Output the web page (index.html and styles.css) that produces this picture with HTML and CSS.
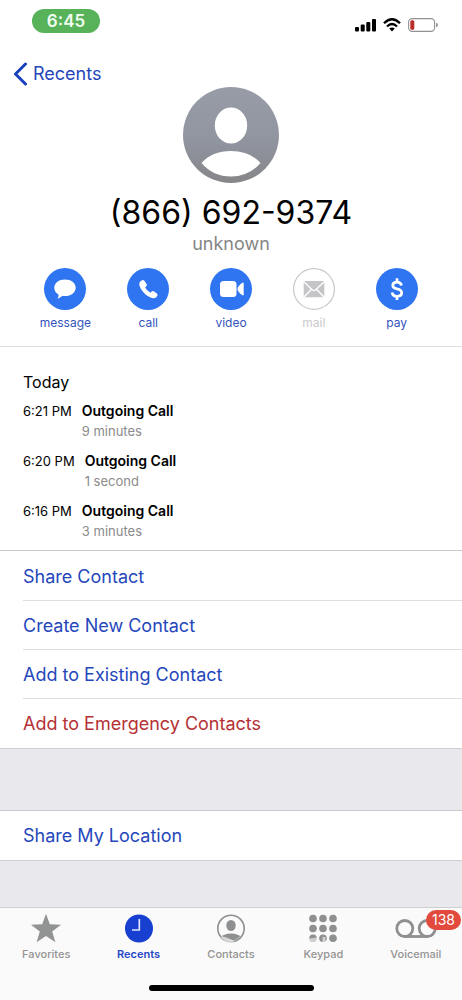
FILE: index.html
```html
<!DOCTYPE html>
<html lang="en">
<head>
<meta charset="utf-8">
<meta name="viewport" content="width=device-width, initial-scale=1">
<title>(866) 692-9374</title>
<link rel="stylesheet" href="styles.css">
</head>
<body>
<div class="screen">
  <div class="status">
    <span class="clock">6:45</span>
    <div class="indicators">
      <svg width="21" height="14" viewBox="0 0 21 14" aria-hidden="true"><rect x="0" y="9" width="4" height="4.500" rx="1"/><rect x="5.700" y="6.500" width="4" height="7" rx="1"/><rect x="11.300" y="4" width="4" height="9.500" rx="1"/><rect x="17" y="1" width="4" height="12.500" rx="1"/></svg>
      <svg width="18" height="14" viewBox="0 0 18 14" aria-hidden="true"><g fill="none" stroke="#000" stroke-width="2.300"><path d="M1 5.200Q9-2.600 17 5.200"/><path d="M4 8.500Q9 3.600 14 8.500"/></g><path d="M6.200 10.600Q9 8.400 11.800 10.600L9 13.600Z"/></svg>
      <svg width="30" height="14" viewBox="0 0 30 14" aria-hidden="true"><rect x=".6" y=".6" width="26" height="12.800" rx="3.600" fill="#fff" stroke="#959092" stroke-width="1.100"/><rect x="2.300" y="2.300" width="4" height="9.400" rx="1.500" fill="#b82d2b"/><path d="M28 4.800Q30 5.300 30 7T28 9.200Z" fill="#999"/></svg>
    </div>
  </div>
  <nav class="nav">
    <a class="back" href="#"><svg width="15" height="24" viewBox="0 0 15 24" aria-hidden="true"><path d="M12.500 2L2.500 12L12.500 22" fill="none" stroke="#1741bd" stroke-width="3" stroke-linecap="round" stroke-linejoin="round"/></svg>Recents</a>
  </nav>
  <main>
    <header class="profile">
      <svg class="avatar" width="96" height="96" viewBox="0 0 96 96" aria-hidden="true"><defs><linearGradient id="g" x1="0" y1="0" x2="0" y2="1"><stop offset="0" stop-color="#989ca7"/><stop offset=".55" stop-color="#9195a0"/><stop offset="1" stop-color="#868689"/></linearGradient></defs><circle cx="48" cy="48" r="48" fill="url(#g)"/><ellipse cx="48" cy="38.500" rx="16.200" ry="18" fill="#fff"/><path d="M18.500 76Q29 64 48 64T77.500 76Q66 89.500 48 89.500T18.500 76Z" fill="#fff"/></svg>
      <h1 class="number">(866) 692-9374</h1>
      <p class="kind">unknown</p>
      <div class="actions">
        <button class="action" type="button"><svg class="disc" viewBox="0 0 42 42" aria-hidden="true"><circle cx="21" cy="21" r="21" fill="#2f74f0"/><path d="M21 11.500c6 0 10.700 3.500 10.700 8.200s-4.700 8.300-10.700 8.300q-1.500 0-2.700-.3c-1.300 1.500-3 2.500-5 2.800 1-1 1.400-2.500 1.200-4-2.600-1.500-4.200-4-4.200-6.800 0-4.700 4.700-8.200 10.700-8.200Z" fill="#fff"/></svg>message</button>
        <button class="action" type="button"><svg class="disc" viewBox="0 0 42 42" aria-hidden="true"><circle cx="21" cy="21" r="21" fill="#2f74f0"/><path d="M15 12.200q1.400-.8 2.400.6l2.200 3.200q.7 1.200-.3 2.200l-1.200 1.200q1.800 3.300 5.300 5.300l1.200-1.200q1-1 2.200-.2l3 2.100q1.400 1 .5 2.500-1.500 2.800-4.400 2.400c-3-.4-6.500-2.600-9.300-5.700-2.700-2.900-4.300-6.200-4.400-8.800q0-2.400 2.800-3.600Z" fill="#fff"/></svg>call</button>
        <button class="action" type="button"><svg class="disc" viewBox="0 0 42 42" aria-hidden="true"><circle cx="21" cy="21" r="21" fill="#2f74f0"/><rect x="10" y="13" width="16.500" height="16" rx="3.500" fill="#fff"/><path d="M27.500 21q0-1.500.8-2.300 2.200-3.500 4.700-4.200.7 0 .7.900v11.200q0 .9-.7.900-2.500-.7-4.700-4.200-.8-.8-.8-2.300Z" fill="#fff"/></svg>video</button>
        <button class="action off" type="button" disabled><svg class="disc" viewBox="0 0 42 42" aria-hidden="true"><circle cx="21" cy="21" r="20.400" fill="#fff" stroke="#c8c8c8" stroke-width="1.200"/><rect x="10.700" y="13" width="20.600" height="16.200" rx="1" fill="#c5c5c7"/><path d="M10.500 13.500l8.700 8.300q1.800 1.500 3.600 0l8.700-8.300M11 29l7.300-7.500M31 29l-7.300-7.500" fill="none" stroke="#fff" stroke-width="1.300"/></svg>mail</button>
        <button class="action" type="button"><svg class="disc" viewBox="0 0 42 42" aria-hidden="true"><circle cx="21" cy="21" r="21" fill="#2f74f0"/><path d="M25.400 17.600C25 15.200 23.500 14.200 21 14.200c-2.600 0-4.200 1.200-4.200 3.200 0 2.200 1.800 2.900 4.200 3.500 2.700.6 4.700 1.400 4.700 3.900 0 2.200-1.800 3.500-4.700 3.500-2.800 0-4.500-1.200-4.900-3.800" fill="none" stroke="#fff" stroke-width="2.800"/><path d="M21 10.200v4M21 28v4" fill="none" stroke="#fff" stroke-width="2.600"/></svg>pay</button>
      </div>
    </header>
    <section class="history">
      <h2 class="day">Today</h2>
      <div class="call"><time>6:21 PM</time><div><strong>Outgoing Call</strong><p>9 minutes</p></div></div>
      <div class="call"><time>6:20 PM</time><div><strong>Outgoing Call</strong><p>1 second</p></div></div>
      <div class="call"><time>6:16 PM</time><div><strong>Outgoing Call</strong><p>3 minutes</p></div></div>
    </section>
    <div class="list contact">
      <button class="item" type="button">Share Contact</button>
      <button class="item" type="button">Create New Contact</button>
      <button class="item" type="button">Add to Existing Contact</button>
      <button class="item danger" type="button">Add to Emergency Contacts</button>
    </div>
    <div class="list share">
      <button class="item" type="button">Share My Location</button>
    </div>
  </main>
  <footer class="tabs-area">
    <nav class="tabs">
      <a class="tab" href="#"><svg width="32" height="30" viewBox="0 0 32 30" aria-hidden="true"><path d="M16 .8L19.800 11.300L31 11.700L22.200 18.500L25.400 29.200L16 23L6.600 29.200L9.800 18.500L1 11.700L12.200 11.300Z" fill="#929494"/></svg>Favorites</a>
      <a class="tab active" href="#"><svg width="30" height="30" viewBox="0 0 30 30" aria-hidden="true"><circle cx="15" cy="15.500" r="14" fill="#173fd0"/><path d="M15.300 6v11H8" fill="none" stroke="#dfe6ff" stroke-width="1.700"/></svg>Recents</a>
      <a class="tab" href="#"><svg width="30" height="30" viewBox="0 0 30 30" aria-hidden="true"><clipPath id="c"><circle cx="15" cy="15.500" r="12"/></clipPath><circle cx="15" cy="15.500" r="13.200" fill="none" stroke="#8e8f90" stroke-width="1.600"/><g clip-path="url(#c)" fill="#8e8f90"><ellipse cx="15" cy="12.500" rx="4.700" ry="5.500"/><path d="M3 25q5-4.500 12-4.500T27 25V30H3Z"/></g><path d="M4.500 23.500q8 0 14 5.500l-4 1Q8 29 4.500 23.500Z" fill="#fafafa" opacity=".6"/></svg>Contacts</a>
      <a class="tab" href="#"><svg width="30" height="30" viewBox="0 0 30 30" fill="#8e8f90" aria-hidden="true"><circle cx="5" cy="5.500" r="3.800"/><circle cx="15" cy="5.500" r="3.800"/><circle cx="25" cy="5.500" r="3.800"/><circle cx="5" cy="15.500" r="3.800"/><circle cx="15" cy="15.500" r="3.800"/><circle cx="25" cy="15.500" r="3.800"/><circle cx="5" cy="25.300" r="3.800"/><circle cx="15" cy="25.300" r="3.800"/><circle cx="25" cy="25.300" r="3.800"/><path d="M1 25.500l8-1v3l-4 2-4-2ZM14.500 24h3v5h-3Z" fill="#fafafa" opacity=".6"/></svg>Keypad</a>
      <a class="tab" href="#"><svg width="42" height="30" viewBox="0 0 42 30" fill="none" stroke="#8e8f90" stroke-width="2.800" aria-hidden="true"><circle cx="9.800" cy="15.500" r="8"/><circle cx="32.200" cy="15.500" r="8"/><path d="M9.800 23.500H32.200"/></svg>Voicemail<span class="badge">138</span></a>
    </nav>
    <div class="home"></div>
  </footer>
</div>
</body>
</html>
```
FILE: styles.css
```css
* { box-sizing: border-box; }
body, h1, h2, p { margin: 0; font-weight: 400; }
body { font-family: Inter, "Liberation Sans", sans-serif; color: #000; background: #fff; }
button { font: inherit; border: 0; background: none; padding: 0; }
a { text-decoration: none; }
svg { display: block; flex: none; }
.screen { min-height: 100vh; display: flex; flex-direction: column; }
.status { display: flex; justify-content: space-between; align-items: center; padding: 9px 24px 0 32px; }
.clock { width: 68px; line-height: 24px; border-radius: 12px; background: #57b25a; color: #f2fff0; font-size: 17px; font-weight: 600; text-align: center; }
.indicators { display: flex; gap: 7px; padding-top: 8px; }
.nav { padding: 29px 13px 0; height: 54px; }
.back { display: inline-flex; align-items: center; gap: 5px; color: #2547bb; font-size: 18px; line-height: 24px; }
main { flex: 1; background: #e9e9ed; }
.profile { display: flex; flex-direction: column; align-items: center; background: #fff; border-bottom: 1px solid #dedede; padding-bottom: 15px; }
.number { font-size: 32px; line-height: 40px; padding-top: 10px; }
.kind { color: #858585; font-size: 18px; line-height: 22px; }
.actions { align-self: stretch; display: grid; grid-template-columns: repeat(5, 1fr); padding: 13px 24px 0; }
.action { display: flex; flex-direction: column; align-items: center; gap: 5px; color: #3454bd; font-size: 12px; line-height: 16px; }
.action.off { color: #cbcbcb; }
.disc { width: 42px; height: 42px; }
.history { background: #fff; padding: 23px 23px 9px; }
.day { font-size: 16px; line-height: 24px; padding-bottom: 7px; }
.call { display: flex; gap: 10px; font-size: 13px; line-height: 20px; padding-bottom: 10px; }
.call:last-child { padding-bottom: 0; }
.call strong { display: block; font-size: 14px; font-weight: 600; }
.call p { color: #8b8b8b; }
.list { background: #fff; border-top: 1px solid #c9c9cb; border-bottom: 1px solid #cfcfd2; padding-left: 23px; }
.contact { padding-top: 1px; }
.item { display: block; width: 100%; height: 49px; text-align: left; font-size: 18px; color: #2547bb; border-bottom: 1px solid #dedee0; }
.item:last-child { border-bottom: 0; }
.item.danger { color: #b53135; }
.share { margin-top: 61px; }
.tabs-area { background: #fafafa; border-top: 1px solid #cfcfd1; padding-bottom: 9px; }
.tabs { display: grid; grid-template-columns: repeat(5, 1fr); padding-top: 5px; }
.tab { position: relative; display: flex; flex-direction: column; align-items: center; gap: 3px; color: #939393; font-size: 11px; font-weight: 500; line-height: 16px; }
.tab.active { color: #2547c8; font-weight: 600; }
.badge { position: absolute; top: -3px; right: 1px; padding: 0 6px; line-height: 20px; border-radius: 10px; background: #e24a3d; color: #fff; font-size: 14px; font-weight: 400; }
.home { width: 165px; height: 6px; margin: 23px auto 0; border-radius: 3px; background: #000; }
```
